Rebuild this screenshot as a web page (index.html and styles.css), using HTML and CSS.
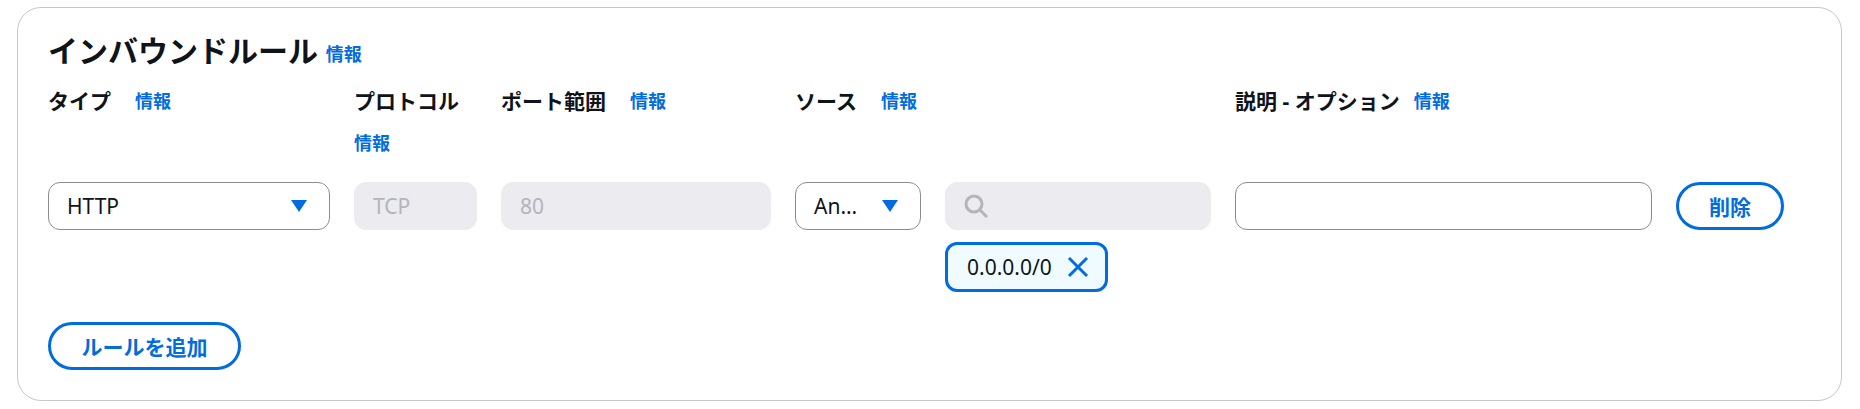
FILE: index.html
```html
<!DOCTYPE html>
<html lang="ja">
<head>
    <meta charset="UTF-8">
    <title>インバウンドルール</title>
    <link rel="stylesheet" href="styles.css">
</head>
<body>
    <section class="card">
        <h2 class="card-title">インバウンドルール <a class="info info-title" href="#">情報</a></h2>

        <div class="rule-grid">
            <!-- Column headers -->
            <div class="field-label"><span>タイプ</span><a class="info" href="#">情報</a></div>
            <div class="field-label"><span>プロトコル</span><a class="info" href="#">情報</a></div>
            <div class="field-label"><span>ポート範囲</span><a class="info" href="#">情報</a></div>
            <div class="field-label"><span>ソース</span><a class="info" href="#">情報</a></div>
            <div class="field-label"></div>
            <div class="field-label field-label-tight"><span>説明 - オプション</span><a class="info" href="#">情報</a></div>
            <div class="field-label"></div>

            <!-- Rule row -->
            <div class="select">
                <span class="select-text">HTTP</span>
                <svg class="caret" viewBox="0 0 16 12"><path d="M0 0h16L8 12z"/></svg>
            </div>
            <input class="input" type="text" value="TCP" disabled>
            <input class="input" type="text" value="80" disabled>
            <div class="select">
                <span class="select-text">An…</span>
                <svg class="caret" viewBox="0 0 16 12"><path d="M0 0h16L8 12z"/></svg>
            </div>
            <div class="source-cell">
                <div class="search">
                    <svg class="search-icon" viewBox="0 0 24 24"><circle cx="10" cy="10" r="8"/><path d="M16 16l7 7"/></svg>
                    <input class="input search-input" type="text" disabled>
                </div>
                <div class="chip">
                    <span>0.0.0.0/0</span>
                    <svg class="chip-close" viewBox="0 0 22 22"><path d="M2 2l18 18M20 2L2 20"/></svg>
                </div>
            </div>
            <input class="input input-on" type="text">
            <button class="btn">削除</button>
        </div>

        <button class="btn btn-add">ルールを追加</button>
    </section>
</body>
</html>
```
FILE: styles.css
```css
body {
    margin: 0;
    padding: 7px 18px 8px 17px;
    background-color: #fff;
    color: #0f141a;
    font-family: "Noto Sans", "Noto Sans CJK JP", sans-serif;
    font-size: 21px;
}

.card {
    box-sizing: border-box;
    height: 394px;
    padding: 23px 30px 30px;
    border: 1.5px solid #c6c6cd;
    border-radius: 24px;
}

.card-title {
    margin: 0 0 12px;
    font-size: 30px;
    line-height: 40px;
    font-weight: 700;
}

.info {
    color: #006ce0;
    font-size: 18px;
    font-weight: 700;
    text-decoration: none;
}

.info-title {
    vertical-align: 1px;
}

.rule-grid {
    display: grid;
    grid-template-columns: 282px 123px 270px 126px 266px 417px 108px;
    column-gap: 24px;
    align-items: start;
}

.field-label {
    display: flex;
    flex-wrap: wrap;
    column-gap: 24px;
    row-gap: 12px;
    align-items: center;
    align-content: flex-start;
    min-height: 96px;
    font-weight: 700;
    line-height: 30px;
}

.field-label-tight {
    column-gap: 14px;
}

.select {
    box-sizing: border-box;
    display: flex;
    align-items: center;
    justify-content: space-between;
    gap: 20px;
    height: 48px;
    padding: 0 22px 0 18px;
    border: 1.5px solid #8c8c94;
    border-radius: 12px;
}

.select-text {
    flex: 1;
    white-space: nowrap;
}

.caret {
    flex: none;
    width: 16px;
    height: 12px;
    fill: #006ce0;
}

.input {
    box-sizing: border-box;
    width: 100%;
    height: 48px;
    padding: 0 18px;
    border: 1.5px solid #ebebf0;
    border-radius: 12px;
    background-color: #ebebf0;
    color: #b4b4bb;
    font: inherit;
}

.input-on {
    border-color: #8c8c94;
    background-color: #fff;
}

.source-cell {
    display: flex;
    flex-direction: column;
    align-items: flex-start;
    gap: 12px;
}

.search {
    position: relative;
    width: 100%;
}

.search-icon {
    position: absolute;
    top: 12px;
    left: 19px;
    width: 24px;
    height: 24px;
    fill: none;
    stroke: #b4b4bb;
    stroke-width: 3;
}

.chip {
    box-sizing: border-box;
    display: flex;
    align-items: center;
    gap: 15px;
    height: 50px;
    padding: 0 16px 0 19px;
    border: 3px solid #006ce0;
    border-radius: 12px;
    background-color: #f0fbff;
}

.chip-close {
    width: 22px;
    height: 22px;
    fill: none;
    stroke: #006ce0;
    stroke-width: 3;
}

.btn {
    box-sizing: border-box;
    height: 48px;
    padding: 0 30px;
    border: 3px solid #006ce0;
    border-radius: 30px;
    background-color: #fff;
    color: #006ce0;
    font: inherit;
    font-weight: 700;
}

.btn-add {
    margin-top: 30px;
    padding: 0 30.5px;
}
```
